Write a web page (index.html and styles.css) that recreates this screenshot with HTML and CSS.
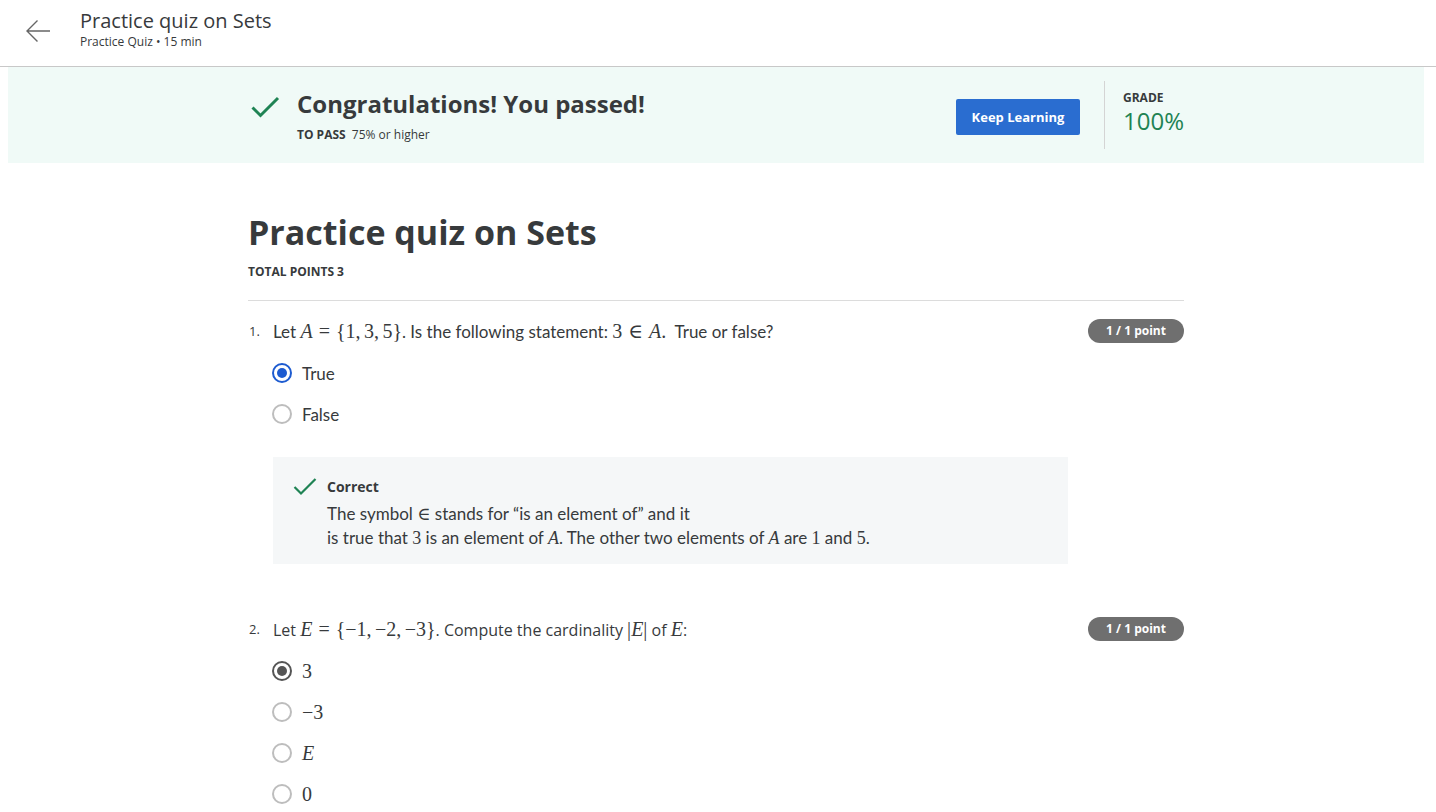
FILE: index.html
```html
<!DOCTYPE html>
<html lang="en">
<head>
<meta charset="utf-8">
<title>Practice quiz on Sets</title>
<link rel="stylesheet" href="styles.css">
</head>
<body>
<header class="topbar">
  <a class="back" href="#" aria-label="Back">
    <svg width="26" height="24" viewBox="0 0 26 24"><path d="M25 12H2M12.5 1.5L2 12l10.5 10.5" fill="none" stroke="#666" stroke-width="1.4"/></svg>
  </a>
  <div class="top-titles">
    <div class="top-title">Practice quiz on Sets</div>
    <div class="top-sub">Practice Quiz • 15 min</div>
  </div>
</header>

<section class="banner">
  <div class="banner-inner">
    <svg class="pass-check" width="30" height="22" viewBox="0 0 30 22"><path d="M2.5 11.5l8 8L28 2" fill="none" stroke="#1f8354" stroke-width="3"/></svg>
    <div class="pass-text">
      <h2 class="pass-title">Congratulations! You passed!</h2>
      <div class="pass-req"><b>TO PASS</b> 75% or higher</div>
    </div>
    <button class="keep">Keep Learning</button>
    <div class="grade">
      <div class="grade-label">GRADE</div>
      <div class="grade-value">100%</div>
    </div>
  </div>
</section>

<main class="content">
  <h1 class="quiz-title">Practice quiz on Sets</h1>
  <div class="total">TOTAL POINTS 3</div>
  <hr class="rule">

  <div class="question">
    <div class="q-head">
      <span class="q-num">1.</span>
      <div class="q-text narrow">Let <span class="m"><i>A</i><span class="rel">=</span>{1,<span class="th"></span>3,<span class="th"></span>5}</span>. Is the following statement: <span class="m">3<span class="rel">∈</span><i>A</i>.</span>&nbsp; True or false?</div>
      <span class="badge">1 / 1 point</span>
    </div>
    <div class="options">
      <label class="opt"><span class="radio checked-blue"></span><span class="narrow">True</span></label>
      <label class="opt"><span class="radio"></span><span class="narrow">False</span></label>
    </div>
    <div class="feedback">
      <div class="fb-head">
        <svg width="24" height="18" viewBox="0 0 24 18"><path d="M1.5 9l6.5 6.5L22.5 1" fill="none" stroke="#1f8354" stroke-width="2.2"/></svg>
        <span class="fb-title">Correct</span>
      </div>
      <div class="fb-body narrow">The symbol <span class="m">∈</span> stands for “is an element of” and it<br>is true that <span class="m">3</span> is an element of <span class="m"><i>A</i></span>. The other two elements of <span class="m"><i>A</i></span> are <span class="m">1</span> and <span class="m">5</span>.</div>
    </div>
  </div>

  <div class="question q2">
    <div class="q-head">
      <span class="q-num">2.</span>
      <div class="q-text">Let <span class="m"><i>E</i><span class="rel">=</span>{−1,<span class="th"></span>−2,<span class="th"></span>−3}</span>. Compute the cardinality <span class="m">|<i>E</i>|</span> of <span class="m"><i>E</i></span>:</div>
      <span class="badge">1 / 1 point</span>
    </div>
    <div class="options">
      <label class="opt"><span class="radio checked-grey"></span><span class="m">3</span></label>
      <label class="opt"><span class="radio"></span><span class="m">−3</span></label>
      <label class="opt"><span class="radio"></span><span class="m"><i>E</i></span></label>
      <label class="opt"><span class="radio"></span><span class="m">0</span></label>
    </div>
  </div>
</main>
</body>
</html>
```

FILE: styles.css
```css
* { box-sizing: border-box; }
html, body { margin: 0; padding: 0; background: #fff; }
body {
  font-family: "Open Sans", "Noto Sans", sans-serif;
  color: #373a3c;
  overflow: hidden;
}

.topbar {
  height: 67px;
  display: flex;
  align-items: flex-start;
  border-bottom: 1px solid #c8c8c8;
}
.back {
  display: flex;
  margin: 19px 0 0 25px;
}
.top-titles { margin: 7px 0 0 29px; }
.top-title {
  font-size: 20px;
  line-height: 27px;
  color: #373a3c;
}
.top-sub {
  font-size: 12px;
  line-height: 16px;
  color: #373a3c;
}

.banner {
  margin: 0 12px 0 8px;
  height: 96px;
  background: #f0faf7;
}
.banner-inner {
  width: 936px;
  margin: 0 auto;
  height: 100%;
  display: flex;
  align-items: flex-start;
}
.pass-check { margin: 29px 0 0 2px; flex: none; }
.pass-text { margin: 21px 0 0 17px; flex: 1; }
.pass-title {
  margin: 0;
  font-size: 24px;
  line-height: 32px;
  font-weight: 700;
  color: #373a3c;
}
.pass-req {
  margin-top: 7px;
  font-size: 12px;
  line-height: 16px;
}
.pass-req b { font-weight: 700; margin-right: 3px; }
.keep {
  margin-top: 32px;
  width: 124px;
  height: 36px;
  border: none;
  border-radius: 2px;
  background: #2a6dd0;
  color: #fff;
  font-family: inherit;
  font-size: 13px;
  font-weight: 700;
  padding: 0;
}
.grade {
  margin: 14px 0 0 24px;
  padding-left: 18px;
  height: 68px;
  border-left: 1px solid #d4d4d4;
  width: 80px;
}
.grade-label {
  margin-top: 10px;
  font-size: 12px;
  line-height: 14px;
  font-weight: 700;
}
.grade-value {
  font-size: 24px;
  line-height: 32px;
  color: #1f8354;
}

.content {
  width: 936px;
  margin: 0 auto;
  position: relative;
  left: -2px;
}
.quiz-title {
  margin: 46px 0 0;
  font-size: 34px;
  line-height: 46px;
  font-weight: 700;
  color: #373a3c;
}
.total {
  margin-top: 9px;
  font-size: 12px;
  line-height: 16px;
  font-weight: 700;
}
.rule {
  margin: 20px 0 0;
  border: none;
  border-top: 1px solid #dcdcdc;
}

.question { margin-top: 17px; }
.q2 { margin-top: 52px; }
.q-head {
  display: flex;
  align-items: center;
  height: 26px;
}
.q-num {
  width: 25px;
  padding-left: 1px;
  font-size: 13px;
  color: #373a3c;
}
.q-text {
  flex: 1;
  font-size: 16px;
  color: #373a3c;
}
.narrow {
  font-family: "Lato", "Open Sans", sans-serif;
  font-size: 17px;
}
.m {
  font-family: "Liberation Serif", "DejaVu Serif", serif;
  font-size: 20px;
}
.m i { font-style: italic; }
.rel { margin: 0 0.3em; }
.th { display: inline-block; width: 0.17em; }
.badge {
  flex: none;
  width: 96px;
  height: 24px;
  border-radius: 12px;
  background: #6f6f6f;
  color: #fff;
  font-size: 12px;
  font-weight: 700;
  text-align: center;
  line-height: 24px;
}

.options {
  margin: 19px 0 0 24px;
  display: flex;
  flex-direction: column;
  gap: 21px;
}
.opt {
  display: flex;
  align-items: center;
  height: 20px;
  gap: 10px;
  font-size: 16px;
}
.radio {
  width: 20px;
  height: 20px;
  border-radius: 50%;
  border: 2px solid #bdbdbd;
  flex: none;
  position: relative;
}
.checked-blue { border-color: #1d5bd0; }
.checked-blue::after,
.checked-grey::after {
  content: "";
  position: absolute;
  left: 3px; top: 3px;
  width: 10px; height: 10px;
  border-radius: 50%;
  background: #1d5bd0;
}
.checked-grey { border-color: #555; }
.checked-grey::after { background: #555; }

.feedback {
  margin: 33px 0 0 25px;
  width: 795px;
  height: 107px;
  background: #f5f7f8;
  padding: 20px 20px 0;
}
.fb-head {
  display: flex;
  align-items: center;
  gap: 10px;
}
.fb-title {
  font-size: 14px;
  font-weight: 700;
}
.fb-body {
  margin: 6px 0 0 34px;
  line-height: 24px;
}
.fb-body .m { font-size: 18px; }
```
